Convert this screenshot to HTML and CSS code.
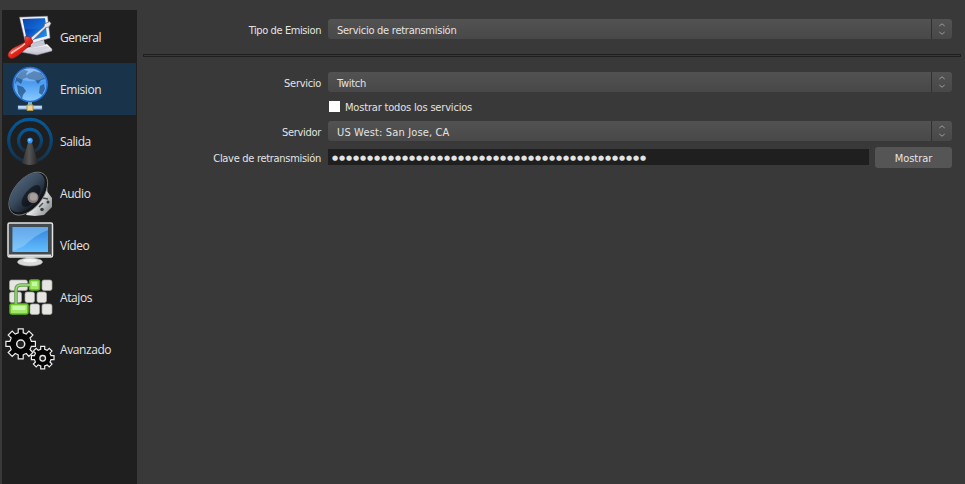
FILE: index.html
```html
<!DOCTYPE html>
<html lang="es">
<head>
<meta charset="utf-8">
<title>Configuración</title>
<link rel="stylesheet" href="styles.css">
</head>
<body>
<div class="window">
<nav class="sidebar">
  <a class="item">
    <svg viewBox="0 0 48 48">
      <defs>
        <linearGradient id="scr" x1="0" y1="0" x2="1" y2="1"><stop offset="0" stop-color="#012990"/><stop offset=".45" stop-color="#0755c8"/><stop offset="1" stop-color="#2da4fa"/></linearGradient>
        <linearGradient id="white" x1="0" y1="0" x2="0" y2="1"><stop offset="0" stop-color="#fff"/><stop offset="1" stop-color="#b9b9ca"/></linearGradient>
        <linearGradient id="red" x1="0" y1="0" x2="1" y2="1"><stop offset=".2" stop-color="#ff9c8c"/><stop offset=".5" stop-color="#e5261c"/><stop offset="1" stop-color="#8d0805"/></linearGradient>
      </defs>
      <path d="M24 34l17-3 5 5v2L31 42l-16-3v-3z" fill="url(#white)" stroke="#85859b" stroke-width=".5"/>
      <path d="M21 36l19-3 4 2-14 4z" fill="#d4d4e0"/>
      <path d="M24 29l14-2 1 5-14 3z" fill="#c6c7d5"/>
      <path d="M13.500 4.200 41.500 3.200 44 25l-24 7z" fill="#f2f2fa" stroke="#9696aa" stroke-width=".5"/>
      <path d="M16.500 6l22.500-.8 2 17.800-20 5.500z" fill="url(#scr)"/>
      <path d="M17 6l22-.8.7 6.500c-6 5-14 5-21.200 4z" fill="#217fe0" opacity=".35"/>
      <path d="M24 25.500 38 13.500l.5-2.500 5-2.500 1.500 2-2 3.500-3 .5L25.500 28.500z" fill="#e5e5ea" stroke="#62636d" stroke-width=".7"/>
      <path d="M19 23.500l5.500.5 2.500 5-4.500 4.500C18 37 14 42 8 45c-4 1.500-7-1-5.500-5C6 34 13 33 19 29z" fill="url(#red)" stroke="#9c1812" stroke-width=".6"/>
      <path d="M5.500 40c4-3 9-5 13-9" stroke="#ffc1b5" stroke-width="1.700" stroke-linecap="round" fill="none"/>
    </svg>
    <span>General</span>
  </a>
  <a class="item active">
    <svg viewBox="0 0 48 48">
      <defs><linearGradient id="globe" x1="0" y1="0" x2="0" y2="1"><stop offset="0" stop-color="#8bb9ee"/><stop offset=".45" stop-color="#4b9bef"/><stop offset="1" stop-color="#8acdff"/></linearGradient></defs>
      <path d="M22 36h4v6h-4z" fill="#7bb1df"/>
      <path d="M12 40.500h24v4H12z" fill="#9dc1e5" stroke="#456f9e" stroke-width=".6"/>
      <path d="M12 42h24" stroke="#e0f0ff"/>
      <path d="M21 40h6v5.500h-6z" fill="#e9d89c" stroke="#b5943a"/>
      <circle cx="24.200" cy="19.500" r="17" fill="url(#globe)" stroke="#236ed0" stroke-width="1.600"/>
      <path d="M10 13c2-4 4-6 8-8l4 1-2 3 2 3-5 2-2 5-4-3-2 3zM22 9l6-3 7 2 4 6-4 1-3 4-3-4-6-1-3-2zM11 20l6 2 3 4-3 4-1 4-4-6zM34 21l4-2 1 5-3 6-3-2z" fill="#204f87" opacity=".72"/>
      <path d="M10 12q4-8 13-8 10 0 15 9-13 7-28-1z" fill="#c6e2ff" opacity=".25"/>
    </svg>
    <span>Emision</span>
  </a>
  <a class="item">
    <svg viewBox="0 0 48 48">
      <defs>
        <linearGradient id="ring" x1="0" y1="0" x2="0" y2="1"><stop offset="0" stop-color="#06599a"/><stop offset=".65" stop-color="#0b416b"/><stop offset="1" stop-color="#173146"/></linearGradient>
        <linearGradient id="cone"><stop offset="0" stop-color="#303030"/><stop offset=".45" stop-color="#555"/><stop offset="1" stop-color="#242424"/></linearGradient>
      </defs>
      <g fill="none" stroke="url(#ring)" stroke-width="3.200"><path d="M18 44a21.200 21.200 0 1 1 12 0"/><path d="M19 34a11.400 11.400 0 1 1 10 0"/></g>
      <path d="M22.500 24h3L32 46q-8 4-16 0z" fill="url(#cone)"/>
      <circle cx="24" cy="23.500" r="2.700" fill="#369bff"/><circle cx="23.500" cy="23" r="1.100" fill="#9dd1ff"/>
    </svg>
    <span>Salida</span>
  </a>
  <a class="item">
    <svg viewBox="0 0 48 48">
      <defs>
        <linearGradient id="spk" x1="0" y1="0" x2="1" y2=".2"><stop offset="0" stop-color="#4d6075"/><stop offset=".5" stop-color="#3a4b5e"/><stop offset="1" stop-color="#1a222c"/></linearGradient>
        <linearGradient id="metal" x1="0" y1="0" x2="1" y2="1"><stop offset="0" stop-color="#fff"/><stop offset=".55" stop-color="#dfe2e2"/><stop offset="1" stop-color="#75797c"/></linearGradient>
      </defs>
      <path d="M40 9l1.500 14 4.500 6v9l-8 8-9 1-9-1z" fill="url(#metal)"/>
      <path d="M37 29l5 1M33 38l4-4" stroke="#4c4e50" stroke-width="1.500"/>
      <circle cx="36" cy="40.500" r="1.800" fill="#3a3c3e"/><circle cx="42" cy="33" r="1.500" fill="#3a3c3e"/>
      <g transform="rotate(39 21.500 24)">
        <ellipse cx="22.500" cy="24" rx="14.500" ry="25" fill="#141618" stroke="#85898b" stroke-width=".8"/>
        <ellipse cx="20.800" cy="24" rx="13" ry="23.200" fill="url(#spk)"/>
        <ellipse cx="26" cy="24" rx="6" ry="13" fill="#070b11" opacity=".6"/>
      </g>
      <circle cx="27" cy="28.500" r="5.500" fill="#817b79"/><circle cx="27.500" cy="28" r="3.800" fill="#b0a8a4" opacity=".8"/>
    </svg>
    <span>Audio</span>
  </a>
  <a class="item">
    <svg viewBox="0 0 48 48">
      <defs><linearGradient id="lcd" x1="0" y1="0" x2="0" y2="1"><stop offset="0" stop-color="#3184db"/><stop offset="1" stop-color="#65bfff"/></linearGradient></defs>
      <path d="M20 35h8l1 6H19z" fill="#b5b5b5"/>
      <ellipse cx="24" cy="41" rx="12.500" ry="4" fill="#d9dadb" stroke="#aaa" stroke-width=".6"/>
      <ellipse cx="24" cy="39.500" rx="7" ry="1.800" fill="#f4f4f4"/>
      <rect x="2" y="2" width="44.500" height="34" rx="1.500" fill="#42494f" stroke="#e4e4e4" stroke-width="1.500"/>
      <path d="M3 34.500h42" stroke="#dfe3e4" stroke-width="2"/>
      <path d="M6.500 6h35.500v25H6.500z" fill="url(#lcd)"/>
      <path d="M6.500 6H42v3Q29 14 18 25L6.500 30z" fill="#b0dbff" opacity=".4"/>
    </svg>
    <span>Vídeo</span>
  </a>
  <a class="item">
    <svg viewBox="0 0 48 48">
      <g transform="translate(0 -1)">
      <g fill="#e5e5e2" stroke="#a5a5a1" stroke-width=".7">
        <rect x="3.500" y="8" width="18" height="10.500" rx="2"/><rect x="36" y="8" width="10" height="10.500" rx="2"/>
        <rect x="3.500" y="20" width="12" height="10.500" rx="2"/><rect x="19" y="20" width="9.500" height="10.500" rx="2"/><rect x="31" y="20" width="9.500" height="10.500" rx="2"/>
        <rect x="24" y="32" width="9.500" height="10.500" rx="2"/><rect x="36" y="32" width="10" height="10.500" rx="2"/>
      </g>
      <g fill="#a0e76c" stroke="#5dba19" stroke-width="1.500"><rect x="23.500" y="8" width="10" height="10" rx="2"/><rect x="4" y="32" width="18" height="10" rx="2"/></g>
      <path d="M26 10h5v4h-5zM6.500 34h13v4h-13z" fill="#d5ffb8" opacity=".75"/>
      <path d="M24 13h-9q-5 0-5 5v14" fill="none" stroke="#5d9f42" stroke-width="3.500"/><path d="M24 13h-9q-5 0-5 5v14" fill="none" stroke="#a7d98c" stroke-width="1.300"/>
      </g>
    </svg>
    <span>Atajos</span>
  </a>
  <a class="item">
    <svg viewBox="0 0 48 48" class="gears"><g transform="translate(-.3 4.300)">
      <path d="M12.500 3.500 12.500-.5h5v4l3 1.300 2.700-3 4 4-2.900 2.900 1.400 3.300h4v5h-4l-1.400 3.200 2.900 3-4 4-2.700-3-3 1.300v4h-5v-4l-3-1.300-3 3-4-4 3-3-1.300-3.200h-4v-5h4l1.300-3.300-3-2.900 4-4 3 3z" fill="#050505" stroke="#ededed" stroke-width="1.200"/>
      <circle cx="15" cy="14.700" r="4" fill="#202020" stroke="#e5e5e5" stroke-width="1.500"/>
      <path d="M35 20v-3h4v3l2.500 1 2-2 2.800 2.800-2 2 1 2.500h3v4h-3l-1 2.400 2 2.100-2.800 2.800-2-2-2.500 1v3h-4v-3l-2.500-1-2 2-2.800-2.800 2-2.100-1-2.400h-3v-4h3l1-2.500-2-2 2.800-2.800 2 2z" fill="#050505" stroke="#ededed" stroke-width="1.200"/>
      <circle cx="37" cy="29" r="2.800" fill="#202020" stroke="#e5e5e5" stroke-width="1.300"/>
    </g></svg>
    <span>Avanzado</span>
  </a>
</nav>
<main class="panel">
  <div class="row type">
    <label class="w-tipo">Tipo de Emision</label>
    <div class="select"><span class="w-serv">Servicio de retransmisión</span><i><svg viewBox="0 0 6 12"><path d="M.3 3 3 .8 5.700 3M.3 9 3 11.200 5.700 9"/></svg></i></div>
  </div>
  <div class="rule"></div>
  <div class="row service">
    <label>Servicio</label>
    <div class="select"><span>Twitch</span><i><svg viewBox="0 0 6 12"><path d="M.3 3 3 .8 5.700 3M.3 9 3 11.200 5.700 9"/></svg></i></div>
  </div>
  <div class="row check"><span class="box"></span><span class="w-todos">Mostrar todos los servicios</span></div>
  <div class="row server">
    <label>Servidor</label>
    <div class="select"><span class="w-us">US West: San Jose, CA</span><i><svg viewBox="0 0 6 12"><path d="M.3 3 3 .8 5.700 3M.3 9 3 11.200 5.700 9"/></svg></i></div>
  </div>
  <div class="row keyrow">
    <label class="w-clave">Clave de retransmisión</label>
    <div class="key">●●●●●●●●●●●●●●●●●●●●●●●●●●●●●●●●●●●●●●●●●●●●●</div>
    <button>Mostrar</button>
  </div>
</main>
</div>
</body>
</html>
```
FILE: styles.css
```css
* { box-sizing: border-box; }
body {
  margin: 0;
  background: #393939;
  color: #e3e3e3;
  font: 11px/20px "DejaVu Sans Condensed", "DejaVu Sans", sans-serif;
  font-stretch: condensed;
  letter-spacing: -0.3px;
  white-space: nowrap;
}
.window { display: flex; width: 965px; height: 484px; overflow: hidden; }
.sidebar { width: 135px; margin: 10px 0 0 2px; padding: 1px; background: #1f1f1f; flex: none; }
.item {
  display: flex;
  align-items: center;
  gap: 6px;
  height: 52px;
  padding-left: 3px;
  font: 12px/20px "Open Sans", "Noto Sans", sans-serif;
  letter-spacing: -0.42px;
}
.item span { padding-top: 2px; }
.item svg { width: 48px; height: 48px; flex: none; }
.item .gears { overflow: visible; }
.active { background: #19334b; }
.panel { flex: 1; padding: 19px 4px 0 6px; }
.row { display: flex; height: 20px; padding-right: 9px; }
.row label { width: 178px; margin-right: 7px; text-align: right; line-height: 24px; flex: none; }
.w-tipo { letter-spacing: -0.4px; }
.w-serv { letter-spacing: -0.26px; }
.w-todos { padding-top: 2px; letter-spacing: -0.18px; }
.w-us { letter-spacing: 0.15px; }
.select {
  display: flex;
  flex: 1;
  justify-content: space-between;
  background: linear-gradient(#525252, #484848);
  border-radius: 3px;
  padding-left: 9px;
  line-height: 24px;
}
.select i { display: flex; align-items: center; justify-content: center; width: 21px; border-left: 1px solid #303030; }
.select svg { width: 6px; height: 12px; fill: none; stroke: #9b9b9b; overflow: visible; }
.rule { height: 3px; margin: 15px 0; border: 1px solid #1f1f1f; }
.check { align-items: center; height: 11px; margin: 9px 0; padding-left: 186px; gap: 5px; }
.box { width: 11px; height: 11px; background: #fff; }
.keyrow { height: 21px; margin-top: 6px; }
.row .w-clave { line-height: 23px; }
.key {
  width: 541px;
  height: 16px;
  margin-top: 2px;
  padding-left: 4px;
  background: #1f1f1f;
  font: 7px/19px "DejaVu Sans", sans-serif;
  letter-spacing: 0.89px;
}
button {
  width: 77px;
  height: 21px;
  margin-left: 6px;
  padding: 2px 0 0;
  border: 0;
  border-radius: 3px;
  background: #555;
  color: inherit;
  font: inherit;
  letter-spacing: -0.05px;
}
```
